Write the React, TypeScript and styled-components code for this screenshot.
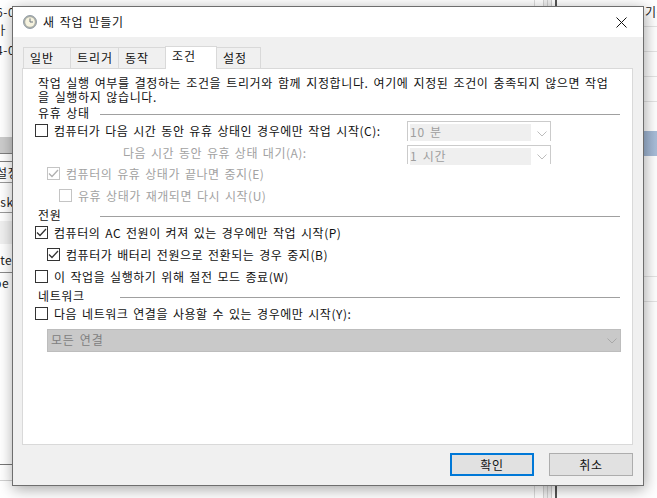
import React from "react";
import styled, { createGlobalStyle } from "styled-components";

const Global = createGlobalStyle`
  html, body { margin: 0; padding: 0; width: 657px; height: 498px; overflow: hidden; background: #fff; }
  * { box-sizing: border-box; }
`;

const FONT = `"Noto Sans CJK KR", "Noto Sans", sans-serif`;

const Desktop = styled.div`
  position: relative;
  width: 657px;
  height: 498px;
  overflow: hidden;
  background: #fff;
  font-family: ${FONT};
  font-size: 12px;
  letter-spacing: 0.6px;
  word-spacing: 1.7px;
  color: #111;
`;

const BackLine = styled.div<{ $top: number; $left: number; $width: number; $color?: string; $h?: number }>`
  position: absolute;
  top: ${(p) => p.$top}px;
  left: ${(p) => p.$left}px;
  width: ${(p) => p.$width}px;
  height: ${(p) => p.$h ?? 1}px;
  background: ${(p) => p.$color ?? "#e4e4e4"};
`;

const BackText = styled.span<{ $top: number; $left: number }>`
  position: absolute;
  top: ${(p) => p.$top}px;
  left: ${(p) => p.$left}px;
  line-height: 16px;
  white-space: nowrap;
  color: #222;
`;

const BlueRow = styled.div`
  position: absolute;
  left: 640px;
  top: 131px;
  width: 17px;
  height: 25px;
  background: linear-gradient(90deg, #9db5d3, #a9bdd8);
`;

const ScrollBar = styled.div<{ $top: number; $height: number }>`
  position: absolute;
  left: 534px;
  top: ${(p) => p.$top}px;
  width: 23px;
  height: ${(p) => p.$height}px;
  border-left: 1px solid #dcdcdc;
  border-right: 2px solid #555;
  background: linear-gradient(90deg, #fff 0 8px, #d4d4d4 8px 9px, #f0f0f0 9px 12px, #cfcfcf 12px 13px, #f0f0f0 13px 16px, #cfcfcf 16px 17px, #fff 17px);
`;

const Dialog = styled.div`
  position: absolute;
  left: 12px;
  top: 6px;
  width: 632px;
  height: 480px;
  background: #f0f0f0;
  border: 1px solid #6e6e6e;
  box-shadow: 1px 3px 14px rgba(0, 0, 0, 0.36);
  display: flex;
  flex-direction: column;
`;

const TitleBar = styled.div`
  height: 30px;
  background: #fff;
  display: flex;
  align-items: center;
  padding-left: 10px;
  gap: 6px;
  flex: none;
`;

const TitleText = styled.span`
  flex: 1;
  padding-bottom: 1px;
  letter-spacing: 0.7px;
`;

const CloseBtn = styled.div`
  width: 46px;
  height: 30px;
  display: flex;
  align-items: center;
  justify-content: center;
  padding-left: 3px;
  padding-top: 1px;
`;

const Tabs = styled.div`
  display: flex;
  align-items: flex-end;
  height: 31px;
  padding-left: 11px;
  flex: none;
`;

const Tab = styled.div<{ $active?: boolean; $w: number }>`
  width: ${(p) => p.$w}px;
  height: ${(p) => (p.$active ? 23 : 21)}px;
  border: 1px solid #d9d9d9;
  border-bottom: none;
  margin-left: -1px;
  background: ${(p) => (p.$active ? "#fff" : "#f0f0f0")};
  line-height: ${(p) => (p.$active ? 17 : 20)}px;
  padding-left: 6px;
  margin-bottom: ${(p) => (p.$active ? -1 : 0)}px;
  position: relative;
  z-index: ${(p) => (p.$active ? 2 : 1)};
  letter-spacing: 1px;
`;

const Panel = styled.div`
  margin-left: 9px;
  width: 611px;
  height: 377px;
  background: #fff;
  border: 1px solid #d9d9d9;
  padding: 7px 0 0 15px;
  flex: none;
  display: flex;
  flex-direction: column;
`;

const Intro = styled.div`
  width: 590px;
  height: 30px;
  line-height: 14px;
  letter-spacing: 0.62px;
  white-space: pre-line;
`;

const Section = styled.div<{ $mt?: number }>`
  display: flex;
  align-items: center;
  height: 14px;
  margin-top: ${(p) => p.$mt ?? 0}px;
`;

const SectionLabel = styled.span<{ $w: number }>`
  width: ${(p) => p.$w}px;
  flex: none;
  line-height: 14px;
  white-space: nowrap;
`;

const SectionRule = styled.div<{ $w: number }>`
  width: ${(p) => p.$w}px;
  height: 1px;
  background: #a0a0a0;
  margin-top: 2px;
`;

const Row = styled.div<{ $indent?: number; $h?: number; $mt?: number; $disabled?: boolean }>`
  display: flex;
  align-items: center;
  height: ${(p) => p.$h ?? 22}px;
  margin-top: ${(p) => p.$mt ?? 0}px;
  margin-left: ${(p) => (p.$indent ?? 0) - 3}px;
  color: ${(p) => (p.$disabled ? "#a2a2a2" : "#111")};
  position: relative;
  letter-spacing: 0.53px;
  white-space: nowrap;
`;

const Box = styled.span<{ $disabled?: boolean }>`
  width: 13px;
  height: 13px;
  flex: none;
  border: 1px solid ${(p) => (p.$disabled ? "#c4c4c4" : "#333")};
  background: #fff;
  margin-right: 6px;
  display: inline-flex;
  align-items: center;
  justify-content: center;
`;

const Combo = styled.div<{ $top: number; $left: number; $h: number }>`
  position: absolute;
  left: ${(p) => p.$left}px;
  top: ${(p) => p.$top}px;
  width: 144px;
  height: ${(p) => p.$h}px;
  border: 1px solid #cbcbcb;
  border-bottom: none;
  display: flex;
  padding: 2px 19px 0 2px;
`;

const ComboValue = styled.div`
  flex: 1;
  background: #efefef;
  color: #9e9e9e;
  line-height: 16px;
  letter-spacing: 0.8px;
  height: 17px;
`;

const Chevron = styled.svg<{ $top: number }>`
  position: absolute;
  right: 3px;
  top: ${(p) => p.$top}px;
`;

const WaitLabel = styled.div`
  position: relative;
  height: 24px;
  margin-top: 1px;
  margin-left: 85px;
  line-height: 24px;
  letter-spacing: 0.5px;
  color: #a2a2a2;
  white-space: nowrap;
`;

const NetCombo = styled.div`
  margin-left: 9px;
  margin-top: 6px;
  width: 574px;
  height: 23px;
  background: #c9c9c9;
  border: 1px solid #bdbdbd;
  color: #808080;
  line-height: 20px;
  padding-left: 3px;
  letter-spacing: 0.8px;
  position: relative;
`;

const Footer = styled.div`
  flex: none;
  display: flex;
  justify-content: flex-end;
  gap: 15px;
  padding: 8px 10px 0 0;
`;

const Button = styled.div<{ $primary?: boolean }>`
  width: 84px;
  height: 23px;
  background: #e1e1e1;
  border: ${(p) => (p.$primary ? "2px solid #0078d7" : "1px solid #adadad")};
  display: flex;
  align-items: center;
  justify-content: center;
  letter-spacing: 0.8px;
`;

const Check = ({ disabled }: { disabled?: boolean }) => (
  <svg width="11" height="11" viewBox="0 0 11 11">
    <path d="M1 5.5 L4 8.5 L10 2" fill="none" stroke={disabled ? "#b0b0b0" : "#333"} strokeWidth="1.3" />
  </svg>
);

const ClockIcon = () => (
  <svg width="14" height="14" viewBox="0 0 14 14">
    <circle cx="7" cy="7" r="6.5" fill="#aeb0a8" stroke="#8a96a2" strokeWidth="0.9" />
    <circle cx="7" cy="7" r="4.8" fill="#f6f3df" />
    <path d="M7 3.4 V7 H10" fill="none" stroke="#6a7480" strokeWidth="1" />
  </svg>
);

const Arrow = ({ color = "#bdbdbd", top }: { color?: string; top: number }) => (
  <Chevron $top={top} width="10" height="6" viewBox="0 0 10 6">
    <path d="M0.5 0.5 L5 5 L9.5 0.5" fill="none" stroke={color} strokeWidth="1" />
  </Chevron>
);

export default function App() {
  return (
    <Desktop>
      <Global />
      <BackText $top={4} $left={-4}>6-0</BackText>
      <BackText $top={22} $left={-3}>ㅏ ㅌ</BackText>
      <BackText $top={42} $left={-4}>4-0</BackText>
      <BackLine $top={137} $left={0} $width={12} $color="#cccccc" $h={16} />
      <BackLine $top={153} $left={0} $width={12} $color="#7f7f7f" />
      <BackLine $top={161} $left={0} $width={12} $color="#7f7f7f" />
      <BackLine $top={182} $left={0} $width={12} $color="#9a9a9a" />
      <BackLine $top={212} $left={0} $width={12} $color="#9a9a9a" />
      <BackLine $top={221} $left={0} $width={12} $color="#f0f0f0" $h={23} />
      <BackLine $top={272} $left={0} $width={12} $color="#8a8a8a" />
      <BackLine $top={464} $left={0} $width={12} $color="#777" />
      <BackLine $top={480} $left={0} $width={12} $color="#d0d0d0" />
      <BackText $top={165} $left={-4}>설정</BackText>
      <BackText $top={194} $left={-7}>ask</BackText>
      <BackText $top={252} $left={-7}>ate</BackText>
      <BackText $top={275} $left={-6}>be</BackText>
      <BackText $top={4} $left={645}>기+</BackText>
      {[26, 51, 76, 101, 276, 301].map((y) => (
        <BackLine key={y} $top={y} $left={644} $width={13} />
      ))}
      <BlueRow />
      <ScrollBar $top={0} $height={8} />
      <ScrollBar $top={484} $height={14} />
      <Dialog>
        <TitleBar>
          <ClockIcon />
          <TitleText>새 작업 만들기</TitleText>
          <CloseBtn>
            <svg width="11" height="11" viewBox="0 0 11 11">
              <path d="M0.5 0.5 L10.5 10.5 M10.5 0.5 L0.5 10.5" stroke="#111" strokeWidth="1" />
            </svg>
          </CloseBtn>
        </TitleBar>
        <Tabs>
          <Tab $w={48}>일반</Tab>
          <Tab $w={49}>트리거</Tab>
          <Tab $w={48}>동작</Tab>
          <Tab $w={52} $active>조건</Tab>
          <Tab $w={45}>설정</Tab>
        </Tabs>
        <Panel>
          <Intro>{"작업 실행 여부를 결정하는 조건을 트리거와 함께 지정합니다. 여기에 지정된 조건이 충족되지 않으면 작업\n을 실행하지 않습니다."}</Intro>
          <Section>
            <SectionLabel $w={62}>유휴 상태</SectionLabel>
            <SectionRule $w={520} />
          </Section>
          <Row $h={20}>
            <Box />
            컴퓨터가 다음 시간 동안 유휴 상태인 경우에만 작업 시작(C):
            <Combo $top={1} $left={372} $h={20}>
              <ComboValue>10 분</ComboValue>
              <Arrow top={9} />
            </Combo>
          </Row>
          <WaitLabel>
            다음 시간 동안 유휴 상태 대기(A):
            <Combo $top={4} $left={284} $h={19}>
              <ComboValue>1 시간</ComboValue>
              <Arrow top={8} />
            </Combo>
          </WaitLabel>
          <Row $indent={12} $h={16} $disabled>
            <Box $disabled><Check disabled /></Box>
            컴퓨터의 유휴 상태가 끝나면 중지(E)
          </Row>
          <Row $indent={24} $mt={3} $disabled>
            <Box $disabled />
            유휴 상태가 재개되면 다시 시작(U)
          </Row>
          <Section $mt={2}>
            <SectionLabel $w={62}>전원</SectionLabel>
            <SectionRule $w={520} />
          </Section>
          <Row $h={20}>
            <Box><Check /></Box>
            컴퓨터의 AC 전원이 켜져 있는 경우에만 작업 시작(P)
          </Row>
          <Row $indent={12} $mt={1}>
            <Box><Check /></Box>
            컴퓨터가 배터리 전원으로 전환되는 경우 중지(B)
          </Row>
          <Row>
            <Box />
            이 작업을 실행하기 위해 절전 모드 종료(W)
          </Row>
          <Section $mt={2}>
            <SectionLabel $w={82}>네트워크</SectionLabel>
            <SectionRule $w={500} />
          </Section>
          <Row $h={20}>
            <Box />
            다음 네트워크 연결을 사용할 수 있는 경우에만 시작(Y):
          </Row>
          <NetCombo>
            모든 연결
            <Arrow color="#a8a8a8" top={8} />
          </NetCombo>
        </Panel>
        <Footer>
          <Button $primary>확인</Button>
          <Button>취소</Button>
        </Footer>
      </Dialog>
    </Desktop>
  );
}
